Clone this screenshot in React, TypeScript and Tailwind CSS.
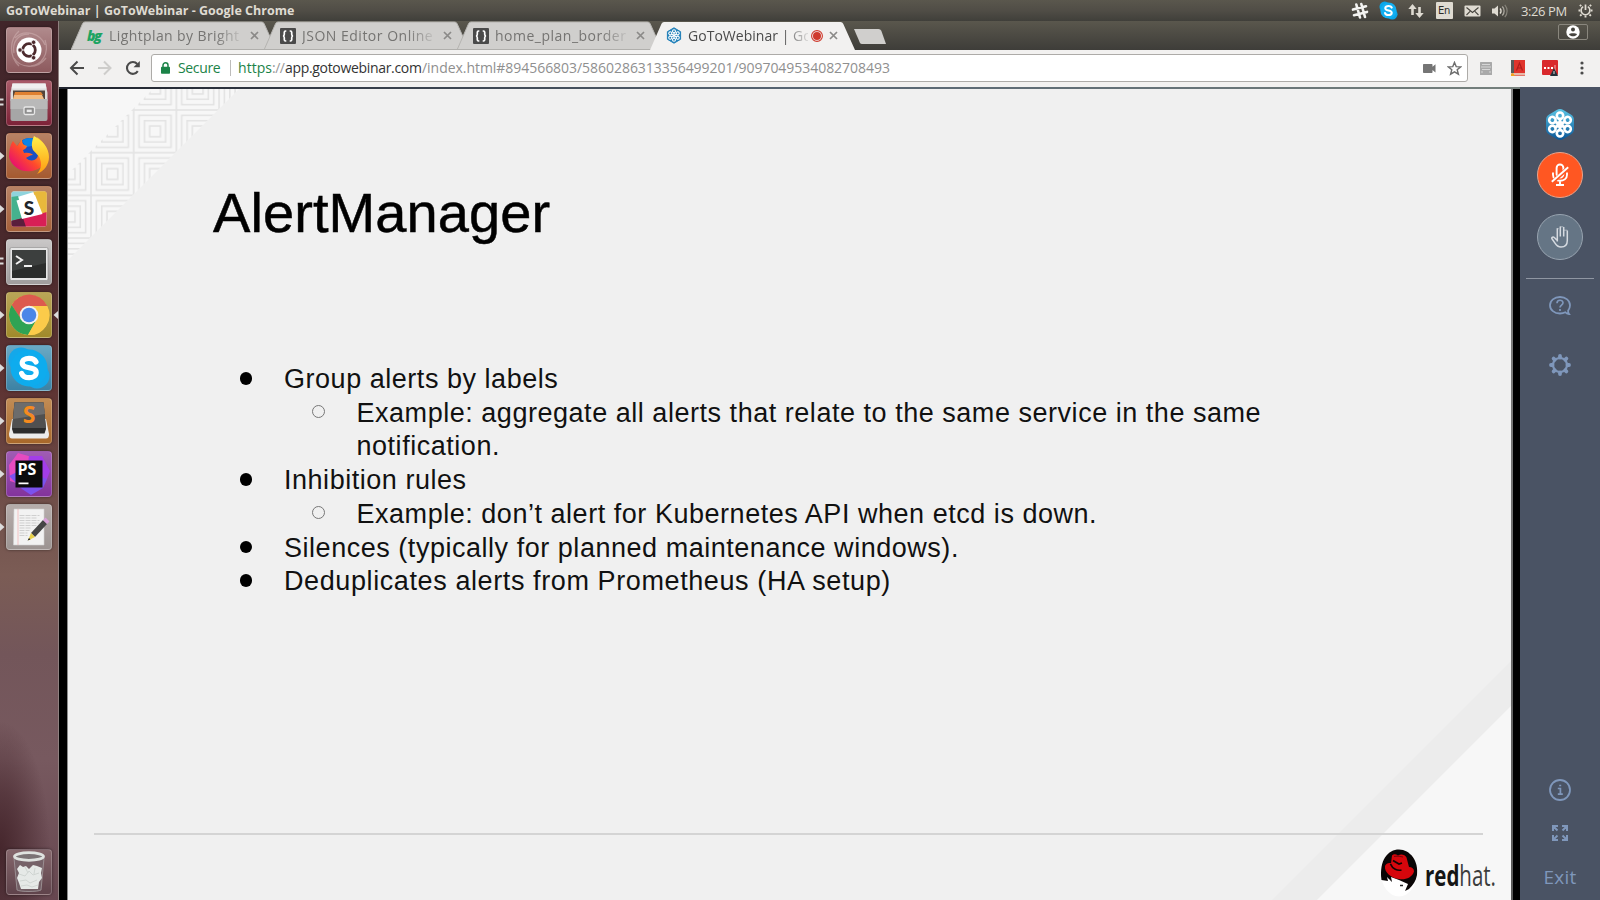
import React from "react";

const ubuntu = "font-['Open_Sans','Noto_Sans',sans-serif]";
const arial = "font-['Liberation_Sans',Arial,sans-serif]";

/* ---------- desktop top bar ---------- */

function SkypeCloud({ size }: { size: number }) {
  return (
    <svg width={size} height={size} viewBox="0 0 20 20">
      <circle cx="6" cy="6" r="5.500" fill="#0aa5e8" />
      <circle cx="14" cy="14" r="5.500" fill="#0aa5e8" />
      <circle cx="10" cy="10" r="8.500" fill="#12aef0" />
      <path d="M13.400 6.900C12.800 5.600 11.500 5.200 10 5.200c-2 0-3.400.9-3.400 2.400 0 3.200 6.800 1.600 6.800 4.700 0 1.500-1.500 2.500-3.500 2.500-1.700 0-3-.7-3.500-2.100" fill="none" stroke="#fff" strokeWidth="2.200" strokeLinecap="round" />
    </svg>
  );
}

function TopBar() {
  return (
    <header className="flex h-[21px] shrink-0 items-center bg-linear-to-b from-[#5a574d] via-[#504d46] to-[#403f3a] pl-[6px]">
      <h1 className={`${ubuntu} grow whitespace-nowrap text-[12.5px] leading-[20px] font-bold tracking-[0.01px] text-[#dfdbd2]`}>
        GoToWebinar | GoToWebinar - Google Chrome
      </h1>
      <div className="flex w-[168px] items-center">
        <span className="flex w-7 justify-center">
          <svg width="18" height="18" viewBox="0 0 18 18" stroke="#f4f4f2" strokeWidth="2.600" strokeLinecap="round" fill="none">
            <path d="M5.300 2.500l3.700 13M10.300 2l3.700 13M2 7.600l13-3.300M3 13.200l13-3.300" />
          </svg>
        </span>
        <span className="flex w-7 justify-center"><SkypeCloud size={19} /></span>
        <span className="flex w-7 justify-center">
          <svg width="16" height="16" viewBox="0 0 16 16" fill="#dfdbd2">
            <path d="M4.500 1l4.200 5H5.800v6H3.200V6H.3zM11.500 15l-4.200-5h2.900V4h2.600v6h2.900z" />
          </svg>
        </span>
        <span className="flex w-7 justify-center">
          <span className="flex h-[17px] w-[17px] items-center justify-center rounded-[1px] bg-[#dfdbd2] font-['DejaVu_Sans',sans-serif] text-[10px] tracking-[-0.3px] text-[#2c2b27]">En</span>
        </span>
        <span className="flex w-7 justify-center">
          <svg width="17" height="12" viewBox="0 0 17 12">
            <rect x=".5" y=".5" width="16" height="11" rx="1" fill="#dfdbd2" />
            <path d="M2.500 2.500l6 5 6-5M2.500 10l3.600-3.600M14.500 10l-3.600-3.600" fill="none" stroke="#45433d" strokeWidth="1.100" />
          </svg>
        </span>
        <span className="flex w-7 justify-center">
          <svg width="18" height="16" viewBox="0 0 18 16" fill="none">
            <path d="M1 5.500h2.500L7 2.500v11L3.500 10.500H1z" fill="#dfdbd2" />
            <path d="M9 5.500a3.500 3.500 0 0 1 0 5" stroke="#dfdbd2" strokeWidth="1.400" />
            <path d="M11.300 3.500a6.500 6.500 0 0 1 0 9" stroke="#aaa79e" strokeWidth="1.300" />
            <path d="M13.800 1.800a9.500 9.500 0 0 1 0 12.400" stroke="#858279" strokeWidth="1.200" />
          </svg>
        </span>
      </div>
      <span className={`${ubuntu} ml-[7px] w-[57px] whitespace-nowrap text-[13px] leading-[20px] tracking-[-0.4px] text-[#dfdbd2]`}>3:26 PM</span>
      <span className="mr-[7px] flex">
        <svg width="15" height="15" viewBox="0 0 15 15" fill="none" stroke="#dfdbd2">
          <path d="M5.200 3.600a4.400 4.400 0 1 0 4.600 0" strokeWidth="1.600" />
          <path d="M7.500 1.500v5.500" strokeWidth="1.700" />
          <path d="M3.200 3.200L1.900 1.900M11.800 3.200l1.300-1.300M2.300 7.500H.5M14.500 7.500h-1.800M3.500 11.500l-1.400 1.400M11.500 11.500l1.400 1.400M7.500 12.500v2" strokeWidth="1.900" />
        </svg>
      </span>
    </header>
  );
}

/* ---------- launcher ---------- */

function Tile({ tint, marks = 0, active = false, children }: { tint: string; marks?: number; active?: boolean; children: React.ReactNode }) {
  return (
    <div className="relative flex h-[46px] w-full shrink-0 pl-[6px]">
      {marks === 1 && (
        <svg className="absolute top-[19px] left-0" width="5" height="8"><path d="M0 0l4.500 4L0 8z" fill="#dcdcdc" /></svg>
      )}
      {marks === 2 && (
        <svg className="absolute top-[18px] left-0" width="4" height="9"><path d="M0 1.500h3.500M0 6.500h3.500" stroke="#dcdcdc" strokeWidth="2" /></svg>
      )}
      <div className={`flex h-[46px] w-[46px] items-center justify-center overflow-hidden rounded-[4px] border border-white/20 shadow-[0_0_3px_rgba(0,0,0,0.5)] ${tint}`}>
        {children}
      </div>
      {active && (
        <svg className="absolute top-[19px] right-0" width="5" height="8"><path d="M5 0L.5 4 5 8z" fill="#dcdcdc" /></svg>
      )}
    </div>
  );
}

function Launcher() {
  return (
    <nav className="flex w-[59px] shrink-0 flex-col border-r border-[#8f8080] bg-[radial-gradient(ellipse_50px_130px_at_0_830px,#45262c_0%,#45262c99_45%,transparent_100%),linear-gradient(180deg,#41252a_0%,#4a292c_25%,#5e3433_42%,#74544e_57%,#7b5c55_63%,#73565a_72%,#77595f_84%,#674750_100%)] pt-[6px] pb-[5px]">
      <div className="flex grow flex-col gap-[7px]">
        <Tile tint="bg-linear-to-b from-[#b08a8c] to-[#8d5a5e]">
          <svg width="44" height="44" viewBox="0 0 44 44" fill="none">
            <path d="M22 6C10 6 5 15 7 25M8 10C18 0 34 6 38 17M38 12c5 14-4 25-14 26M39 30C30 42 13 40 7 30M12 3C2 12 2 28 12 38" stroke="#d9bcbc" strokeOpacity=".45" strokeWidth="1.300" />
            <circle cx="22" cy="22" r="12.500" fill="#fff" />
            <circle cx="22" cy="22" r="6.300" stroke="#4d2b2e" strokeWidth="2.800" />
            <path d="M22 22L13 22M22 22l5-8M22 22l5 8" stroke="#fff" strokeWidth="1" />
            <circle cx="13" cy="22" r="2.200" fill="#4d2b2e" stroke="#fff" strokeWidth=".7" />
            <circle cx="26.600" cy="14.300" r="2.200" fill="#4d2b2e" stroke="#fff" strokeWidth=".7" />
            <circle cx="26.600" cy="29.700" r="2.200" fill="#4d2b2e" stroke="#fff" strokeWidth=".7" />
          </svg>
        </Tile>
        <Tile marks={2} tint="bg-linear-to-b from-[#a85a68] to-[#7d2238]">
          <svg width="44" height="44" viewBox="0 0 44 44">
            <path d="M5.500 2.500h33L40.500 12v8h-37v-8z" fill="#dedede" />
            <path d="M5.500 2.500h33l1 5h-35z" fill="#f0f0f0" />
            <rect x="6" y="9.500" width="32" height="9" fill="#54453c" />
            <path d="M8 11h26l2 3H7z" fill="#e08030" />
            <path d="M7 14h28l2 4H6z" fill="#f3bd84" />
            <path d="M3.500 18h37v20a2 2 0 0 1-2 2h-33a2 2 0 0 1-2-2z" fill="#a6a6a6" />
            <path d="M3.500 18h37v10h-37z" fill="#b9b9b9" />
            <rect x="17" y="26" width="10.500" height="7.500" rx="1.500" fill="#8c8c8c" stroke="#e8e8e8" strokeWidth="1.300" />
            <rect x="19.700" y="28.600" width="5" height="2.500" fill="#e8e8e8" />
          </svg>
        </Tile>
        <Tile marks={1} tint="bg-linear-to-b from-[#b78265] to-[#a55a30]">
          <svg width="44" height="44" viewBox="0 0 44 44">
            <defs>
              <linearGradient id="fox" x1="1" y1="0" x2=".1" y2=".8"><stop offset="0" stopColor="#ffe23c" /><stop offset=".35" stopColor="#ff9a1c" /><stop offset=".65" stopColor="#ff4a2c" /><stop offset="1" stopColor="#e8126c" /></linearGradient>
              <linearGradient id="foxTail" x1="0" y1="0" x2="0" y2="1"><stop offset="0" stopColor="#fff04a" /><stop offset="1" stopColor="#ff9a10" /></linearGradient>
            </defs>
            <circle cx="23" cy="18" r="14" fill="#1c4fc4" />
            <path d="M15 7c3-3 8-4 12-2l-2 7-6 1z" fill="#0a84e8" />
            <path d="M6 7l4 5 5-7c0 4 1 6 5 7-1 3-2 3-4 4l1 3c5-1 8 1 9 2-3 0-5 2-7 3 5 5 13 2 12-5 0-3-1-5-3-7 1-5 3-7 2-9 7 5 11 12 11 19a20 19 0 0 1-39 1C2 17 3 11 6 7z" fill="url(#fox)" />
            <path d="M27 2c9 5 15 12 15 21 0 8-5 14-12 17 4-5 5-10 3-15-1-4-5-6-7-9-2-5-1-9 1-14z" fill="url(#foxTail)" />
          </svg>
        </Tile>
        <Tile marks={1} tint="bg-linear-to-b from-[#b78265] to-[#a5603a]">
          <svg width="44" height="44" viewBox="0 0 44 44">
            <defs><clipPath id="slackClip"><rect x="4.500" y="4.500" width="35" height="35" rx="2" /></clipPath></defs>
            <g clipPath="url(#slackClip)">
              <rect x="4" y="4" width="36" height="36" fill="#fff" />
              <path d="M4 4h26L4 12z" fill="#8fd3dc" />
              <path d="M29 4h11v23z" fill="#e5b438" />
              <path d="M26 4h14v24l-6-1z" fill="#e8b83c" />
              <path d="M4 10l7-1 7 24-14 4z" fill="#45b28e" />
              <path d="M4 34l36-9v15H4z" fill="#d81e56" />
              <path d="M4 34l12-3 3 9H4z" fill="#5a1e3c" />
              <path d="M9.500 13.500L28 8l7.500 19L15 32z" fill="#fff" />
            </g>
            <text x="22" y="28" textAnchor="middle" fontFamily="Lato, sans-serif" fontWeight="900" fontSize="19" fill="#222428">S</text>
          </svg>
        </Tile>
        <Tile marks={2} tint="bg-linear-to-b from-[#c9c7c7] to-[#a09d9d]">
          <svg width="44" height="44" viewBox="0 0 44 44">
            <rect x="3" y="7.500" width="38" height="33" rx="1.500" fill="#e6e6e6" stroke="#8a8a8a" strokeWidth=".6" />
            <rect x="5" y="10" width="34" height="28" fill="#2b2d2c" />
            <path d="M5 10h34v13L5 31z" fill="#3c3f3e" />
            <path d="M9 16l6 4-6 4M17 26h8" fill="none" stroke="#f0f0f0" strokeWidth="2" />
          </svg>
        </Tile>
        <Tile marks={1} active tint="bg-linear-to-b from-[#b9a557] to-[#a08a2a]">
          <svg width="44" height="44" viewBox="0 0 44 44">
            <circle cx="22" cy="22" r="20" fill="#fbc843" />
            <path d="M22 13h18.300A20 20 0 0 0 4.700 12l9 14z" fill="#dc5a4e" />
            <path d="M4.700 12A20 20 0 0 0 21 42l9-16-16 0z" fill="#2fa354" />
            <path d="M40.300 13H22a9 9 0 0 1 8 13l-9 16A20 20 0 0 0 40.300 13z" fill="#fbcb4a" />
            <circle cx="22" cy="22" r="9.300" fill="#f1f1f1" />
            <circle cx="22" cy="22" r="7.300" fill="#4a86e8" />
          </svg>
        </Tile>
        <Tile marks={1} tint="bg-linear-to-b from-[#6aa9c4] to-[#3c82a4]">
          <svg width="44" height="44" viewBox="0 0 44 44">
            <circle cx="14" cy="14" r="12.500" fill="#14a8ea" />
            <circle cx="30" cy="30" r="12.500" fill="#14a8ea" />
            <circle cx="22" cy="22" r="18.500" fill="#0eacee" />
            <path d="M29 16c-1.200-2.500-3.800-3.600-7-3.600-4 0-6.800 1.700-6.800 4.600 0 6.500 14 3 14 9.400 0 3.200-3 5.300-7 5.300-3.600 0-6.600-1.400-7.600-4.300" fill="none" stroke="#fff" strokeWidth="5.200" strokeLinecap="round" />
          </svg>
        </Tile>
        <Tile marks={1} tint="bg-linear-to-b from-[#c18c55] to-[#a8682a]">
          <svg width="44" height="44" viewBox="0 0 44 44">
            <path d="M5 20L2 35c0 3 1 4.500 3 4.500h34c2 0 3-1.500 3-4.500L39 20z" fill="#ececec" />
            <path d="M7.500 3.500h29L39 30l-1.500 4.500h-31L5 30z" fill="#2c2c2c" />
            <path d="M7.500 3.500h29L39 29H5z" fill="#505050" />
            <path d="M7.500 3.500h29L38 15 6.200 20z" fill="#6c6c6c" />
            <text x="22" y="24" textAnchor="middle" fontFamily="Open Sans, sans-serif" fontWeight="700" fontSize="23" fill="#f58a1f">S</text>
          </svg>
        </Tile>
        <Tile marks={1} tint="bg-linear-to-b from-[#a05cb4] to-[#83339c]">
          <svg width="44" height="44" viewBox="0 0 44 44">
            <path d="M2 13L11 1l14 4-3 30L3 29z" fill="#e64bc0" />
            <path d="M22 4l13 0 8 15-3 8-22 4z" fill="#a33de8" />
            <path d="M2 24l12-6 26 9-4 9-12 7-9-6z" fill="#7b52ee" />
            <rect x="8.500" y="8.500" width="27" height="27" fill="#0b0b0d" />
            <text x="10.500" y="22.500" fontFamily="Open Sans, sans-serif" fontWeight="700" fontSize="16" fill="#fff">PS</text>
            <path d="M11.500 31.300h10" stroke="#fff" strokeWidth="1.800" />
          </svg>
        </Tile>
        <Tile marks={1} tint="bg-linear-to-b from-[#b6adab] to-[#9c9492]">
          <svg width="44" height="44" viewBox="0 0 44 44">
            <path d="M7 4h30v36H6.500z" fill="#f2f2f2" stroke="#d0d0d0" strokeWidth=".6" />
            <path d="M11 4v36" stroke="#f2a3a3" strokeWidth=".6" />
            <path d="M12.500 10.500h20M12.500 13h18M12.500 15.500h20M12.500 18h19M12.500 20.500h17M12.500 23h12M12.500 25.500h10M12.500 28h8M12.500 30.500h8" stroke="#cfcfcf" strokeWidth="1" strokeDasharray="5 1" />
            <path d="M36 15l4 4-12 13-4-4z" fill="#454545" />
            <path d="M36 15l2.500-2.500 4 4L40 19z" fill="#d8a0d8" />
            <path d="M24 28l4 4-7 3.500z" fill="#e8d24a" />
            <path d="M22 33l1.500 1.500-3 1z" fill="#222" />
          </svg>
        </Tile>
      </div>
      <Tile tint="bg-linear-to-b from-[#85676c] to-[#5f434b]">
        <svg width="44" height="44" viewBox="0 0 44 44">
          <path d="M7 8h30l-3 32c-3 2-21 2-24 0z" fill="#75646a" fillOpacity=".8" stroke="#a59c9e" strokeWidth=".8" />
          <path d="M10 19l3-4 3 2 3-1 3 3 4-4 4 1 5 2-1 5 1 5-3 4-1 7H14l-2-6-2-5 2-5z" fill="#e6e9e7" />
          <path d="M12 24l6 2 4-5 4 4 6-2M13 31l6-1 4 3 7-3M14 36l6-1 5 2 6-2M18 17l3 6M28 18l-1 6" stroke="#d0d5d2" strokeWidth="1" fill="none" />
          <ellipse cx="22" cy="6.500" rx="14.500" ry="3.800" fill="#7b7375" stroke="#dfe2df" strokeWidth="2.800" />
        </svg>
      </Tile>
    </nav>
  );
}

/* ---------- browser chrome ---------- */

function BracesIcon() {
  return (
    <svg width="16" height="16" viewBox="0 0 16 16">
      <rect width="16" height="16" rx="1" fill="#4a4a4a" />
      <path d="M6.300 3H5.600c-1 0-1.300.5-1.300 1.300v2c0 1-.4 1.600-1.300 1.700.9.1 1.300.7 1.300 1.700v2c0 .8.3 1.300 1.300 1.300h.7M9.700 3h.7c1 0 1.300.5 1.300 1.300v2c0 1 .4 1.600 1.300 1.700-.9.1-1.300.7-1.300 1.700v2c0 .8-.3 1.300-1.300 1.300h-.7" fill="none" stroke="#fff" strokeWidth="1.700" />
    </svg>
  );
}

const petals = [0, 60, 120, 180, 240, 300];

function DaisySmall() {
  return (
    <svg width="16" height="17" viewBox="0 0 16 17">
      <path d="M8 .8l6.600 3.900v7.600L8 16.200l-6.600-3.900V4.700z" fill="#1f7fb8" stroke="#1f7fb8" strokeLinejoin="round" />
      {petals.map((a) => (
        <g key={a} transform={`rotate(${a} 8 8.500)`}>
          <path d="M8 8.500V5.500" stroke="#fff" strokeWidth="1.300" />
          <circle cx="8" cy="4.200" r="1.500" fill="none" stroke="#fff" strokeWidth="1.100" />
        </g>
      ))}
    </svg>
  );
}

function CloseX() {
  return <svg width="9" height="9" viewBox="0 0 9 9"><path d="M1 1l7 7M8 1L1 8" stroke="#8b8a88" strokeWidth="1.700" /></svg>;
}

function Tab({ icon, title, spacing, active = false, first = false }: { icon: React.ReactNode; title: React.ReactNode; spacing: string; active?: boolean; first?: boolean }) {
  return (
    <div className={`relative flex h-[29px] w-[206px] shrink-0 items-center ${first ? "" : "-ml-[13px]"} ${active ? "z-10" : ""}`}>
      <svg className="absolute inset-0" width="206" height="29" viewBox="0 0 206 29">
        <path d="M0 29L11.500 2.800Q12.300 1 14 1H190.500Q192.500 1 193.200 2.800L205 29z" fill={active ? "#f2f1f0" : "#d0cfcd"} stroke={active ? "none" : "#b5b4b1"} strokeWidth="1" />
        {!active && <path d="M0 28.500H206" stroke="#b0afac" />}
      </svg>
      <div className="relative flex w-full items-center pl-4">
        <span className="flex w-[22px] shrink-0">{icon}</span>
        <span className={`${ubuntu} shrink-0 whitespace-nowrap text-[14px] leading-[20px] ${spacing} ${active ? "w-[120px] text-[#4a4a4a] [mask-image:linear-gradient(90deg,#000_94px,transparent_124px)]" : "w-[138px] text-[#757472] [mask-image:linear-gradient(90deg,#000_106px,transparent_136px)]"}`}>
          {title}
        </span>
        {active && (
          <svg className="ml-[3px] shrink-0" width="12" height="12" viewBox="0 0 12 12">
            <circle cx="6" cy="6" r="5.400" fill="none" stroke="#cf3a2d" strokeWidth="1.100" />
            <circle cx="6" cy="6" r="4" fill="#cf3a2d" />
          </svg>
        )}
        <span className={`${active ? "ml-[6px]" : "ml-[3px]"} flex shrink-0`}><CloseX /></span>
      </div>
    </div>
  );
}

function TabStrip() {
  return (
    <div className="flex h-[29px] shrink-0 bg-linear-to-b from-[#5a574d] to-[#3e3d39] pl-[12px]">
      <Tab first spacing="tracking-[0.4px]" title="Lightplan by Bright" icon={<span className={`${ubuntu} text-[14px] leading-[16px] font-extrabold italic tracking-[-1.5px] text-[#1da462]`}>bg</span>} />
      <Tab spacing="tracking-[0.5px]" title="JSON Editor Online" icon={<BracesIcon />} />
      <Tab spacing="tracking-[0.5px]" title="home_plan_border" icon={<BracesIcon />} />
      <Tab active spacing="tracking-[0.03px]" title="GoToWebinar | Go" icon={<DaisySmall />} />
      <svg className="mt-[8px] -ml-[3px]" width="34" height="16" viewBox="0 0 34 16">
        <path d="M1 0h24.500q2 0 2.800 1.800L33 15H9Q7.500 15 6.800 13.500z" fill="#d0cfcd" />
      </svg>
      <div className="ml-auto mr-[12px] mt-[3px] flex h-[16px] w-[30px] items-center justify-center rounded-[2px] border border-[#8a877e]">
        <svg width="14" height="14" viewBox="0 0 14 14">
          <circle cx="7" cy="7" r="6.700" fill="#fff" />
          <circle cx="7" cy="4.600" r="2" fill="#45433e" />
          <path d="M3 9.200c1.200-1.300 6.800-1.300 8 0-1.500 2.700-6.500 2.700-8 0z" fill="#45433e" />
        </svg>
      </div>
    </div>
  );
}

function Toolbar() {
  return (
    <div className="flex h-[37px] shrink-0 items-center bg-[#f2f1f0] pb-[1px]">
      <div className="flex w-[92px] items-center gap-[13px] pl-[10px]">
        <svg width="16" height="16" viewBox="0 0 16 16" fill="none" stroke="#4a4a4a" strokeWidth="2"><path d="M15 8H2.500M8.500 1.500L2 8l6.500 6.500" /></svg>
        <svg width="14" height="16" viewBox="0 0 14 16" fill="none" stroke="#cecdcb" strokeWidth="2"><path d="M0 8h12M6 1.500L12.500 8 6 14.500" /></svg>
        <svg width="16" height="16" viewBox="0 0 16 16"><path d="M12.800 11.200A5.900 5.900 0 1 1 12.300 4" fill="none" stroke="#4a4a4a" strokeWidth="2.100" /><path d="M14.800 1v6.300H8.500z" fill="#4a4a4a" /></svg>
      </div>
      <div className={`${ubuntu} flex h-[28px] w-[1317px] items-center rounded-[3px] border border-[#adaba8] bg-white text-[14px] leading-[26px] whitespace-nowrap`}>
        <svg className="ml-[9px] shrink-0" width="9" height="12" viewBox="0 0 9 12"><path d="M2 5.500V3.300a2.500 2.500 0 0 1 5 0v2.200" fill="none" stroke="#1b8348" strokeWidth="1.500" /><rect y="4.800" width="9" height="7" rx=".8" fill="#1b8348" /></svg>
        <span className="ml-[8px] w-[52px] tracking-[-0.35px] text-[#1b8348]">Secure</span>
        <span className="h-[16px] w-px bg-[#bdbcba]" />
        <span className="ml-[7px] w-[34px] tracking-[0.05px] text-[#1b8348]">https</span>
        <span className="w-[13px] tracking-[-0.5px] text-[#999]">://</span>
        <span className="w-[137px] tracking-[-0.32px] text-[#333]">app.gotowebinar.com</span>
        <span className="tracking-[-0.04px] text-[#8f8f8f]">/index.html#894566803/5860286313356499201/9097049534082708493</span>
        <span className="mr-[5px] ml-auto flex items-center gap-[11px]">
          <svg width="13" height="9" viewBox="0 0 13 9" fill="#757575"><path d="M0 .8Q0 0 .8 0h8Q9.500 0 9.500.8v2L12.500.3v8.200L9.500 6v2.200Q9.500 9 8.800 9h-8Q0 9 0 8.200z" /></svg>
          <svg width="15" height="15" viewBox="0 0 15 15" fill="none" stroke="#6e6e6e" strokeWidth="1.400"><path d="M7.500 1.400l1.700 4.200 4.500.3-3.500 2.900 1.200 4.400-3.900-2.400-3.900 2.400 1.200-4.400L1.300 5.900l4.500-.3z" /></svg>
        </span>
      </div>
      <div className="ml-[2px] flex">
        <span className="flex w-8 items-center justify-center">
          <svg width="12" height="13" viewBox="0 0 12 13"><rect width="12" height="13" rx=".5" fill="#a9a9a9" /><path d="M2 2.500h8M1 5h10M2 7.500h8M1 10h2M9 10h2" stroke="#d6d6d6" /></svg>
        </span>
        <span className="flex w-8 items-center justify-center">
          <svg width="14" height="16" viewBox="0 0 14 16"><rect width="14" height="16" fill="#e0342c" /><rect width="3" height="14" fill="#5a5a5a" /><path d="M0 13h14v2.500H0z" fill="#e8b8a8" /><path d="M0 14l2-1 2 3H0z" fill="#f2a21c" /><path d="M5.500 10.500L8.500 3l3 7.500M6.500 8h4" fill="none" stroke="#b01c1c" strokeWidth="1.200" /></svg>
        </span>
        <span className="flex w-8 items-center justify-center">
          <svg width="16" height="16" viewBox="0 0 16 16"><rect width="16" height="15" rx="1" fill="#d9282c" /><path d="M2 8h2M5.500 8h2M9 8h2" stroke="#fff" strokeWidth="2" /><path d="M13 5v6" stroke="#f3b0b0" /><path d="M12 8l4 8H8z" fill="#23303a" /><path d="M12 11v3" stroke="#ddd" /></svg>
        </span>
        <span className="flex w-8 items-center justify-center">
          <svg width="4" height="14" viewBox="0 0 4 14" fill="#4a4a4a"><circle cx="2" cy="2" r="1.600" /><circle cx="2" cy="7" r="1.600" /><circle cx="2" cy="12" r="1.600" /></svg>
        </span>
      </div>
    </div>
  );
}

/* ---------- shared slide ---------- */

function SlideBackdrop() {
  return (
    <svg className="absolute inset-0" width="1444" height="811" viewBox="0 0 1444 811">
      <defs>
        <pattern id="diamonds" x="24" y="21" width="42.700" height="42.700" patternUnits="userSpaceOnUse">
          <g fill="none" stroke="#e3e3e3" strokeWidth="1.600">
            <rect x="0" y="0" width="42.700" height="42.700" />
            <rect x="5.350" y="5.350" width="32" height="32" />
            <rect x="10.700" y="10.700" width="21.300" height="21.300" />
            <rect x="16" y="16" width="10.700" height="10.700" />
          </g>
        </pattern>
      </defs>
      <path d="M0 0H172L0 172z" fill="#f7f7f7" />
      <path d="M86 0H172L0 172V86z" fill="url(#diamonds)" />
      <path d="M1444 572V811H1205z" fill="#ececec" />
      <path d="M1444 617V811H1250z" fill="#f7f7f7" />
      <path d="M.5 0V811" stroke="#8c8c8c" />
    </svg>
  );
}

function RedHatLogo() {
  return (
    <svg width="124" height="52" viewBox="0 0 124 52">
      <ellipse cx="20" cy="27" rx="18" ry="23.500" fill="#fff" />
      <path d="M2.500 34C0 14 9 3.500 20 3.500S40 15 38 29c-1 6-4 10-8 14l-4 2 3-7-9-4-8-3 1 5-5-5 1 4z" fill="#0a0606" />
      <path d="M13 9.500c2-2 4-1 6 0 3-2 7-1 8.500 2L30 21c3 0 5 1.500 5 4.500C33 32 26 34 20 33 12 32 5 26 6 20c1-2.500 4-3.500 6-2.500z" fill="#d6060c" />
      <path d="M11.500 18c2 5 7 7 11 6M14 14.500l6 3.500 3-1" fill="none" stroke="#140404" strokeWidth="1.700" />
      <path d="M15 10.500l4-.5 5 1" fill="none" stroke="#7a0508" strokeWidth="1.200" />
      <path d="M21 39.500h3" stroke="#222" strokeWidth="1.500" />
      <text x="46" y="39.500" textLength="71" lengthAdjust="spacingAndGlyphs" fontFamily="Open Sans, sans-serif" fontWeight="700" fontSize="29" fill="#151515">
        red<tspan fontWeight="400" fill="#3c3c3c">hat.</tspan>
      </text>
    </svg>
  );
}

function Bullet({ children }: { children: React.ReactNode }) {
  return (
    <li className="flex">
      <span className="flex h-[33.6px] w-[44px] shrink-0 items-center">
        <span className="mt-[-3px] h-[12.5px] w-[12px] rounded-full bg-black" />
      </span>
      <div>{children}</div>
    </li>
  );
}

function SubBullet({ children }: { children: React.ReactNode }) {
  return (
    <div className="flex pl-[28px]">
      <span className="flex h-[33.6px] w-[44.5px] shrink-0 items-center">
        <span className="mt-[-4px] h-[13px] w-[12.5px] rounded-full border border-[#777]" />
      </span>
      <div>{children}</div>
    </div>
  );
}

function Slide() {
  return (
    <main className={`${arial} relative flex h-full w-[1444px] shrink-0 flex-col bg-[#f0f0f0] text-black`}>
      <SlideBackdrop />
      <h2 className="relative mt-[92px] ml-[146px] text-[56px] leading-[64px] tracking-[0.08px] [-webkit-text-stroke:0.5px_#000]">AlertManager</h2>
      <ul className="relative mt-[118px] ml-[173px] text-[27px] leading-[33.7px] tracking-[0.53px] whitespace-nowrap text-[#111]">
        <Bullet>
          Group alerts by labels
          <SubBullet>
            Example: aggregate all alerts that relate to the same service in the same
            <br />
            notification.
          </SubBullet>
        </Bullet>
        <Bullet>
          Inhibition rules
          <SubBullet>Example: don’t alert for Kubernetes API when etcd is down.</SubBullet>
        </Bullet>
        <Bullet>Silences (typically for planned maintenance windows).</Bullet>
        <Bullet><span className="tracking-[0.6px]">Deduplicates alerts from Prometheus (HA setup)</span></Bullet>
      </ul>
      <div className="relative mt-auto mr-[28px] ml-[27px] h-[2px] bg-[#d4d4d4]" />
      <footer className="relative flex h-[65px] shrink-0 justify-end pt-[11px] pr-[8px]">
        <RedHatLogo />
      </footer>
    </main>
  );
}

/* ---------- webinar control rail ---------- */

function GearIcon() {
  return (
    <svg width="24" height="24" viewBox="0 0 24 24" fill="none" stroke="#7f97bb">
      <circle cx="12" cy="12" r="7" strokeWidth="2.200" />
      {[0, 45, 90, 135, 180, 225, 270, 315].map((a) => (
        <path key={a} d="M12 4.500V3" strokeWidth="3.800" strokeLinecap="round" transform={`rotate(${a} 12 12)`} />
      ))}
    </svg>
  );
}

function Rail() {
  return (
    <aside className="flex w-[80px] shrink-0 flex-col items-center bg-[#4a5364] pt-[19px]">
      <svg width="34" height="36" viewBox="0 0 34 36">
        <defs><linearGradient id="daisy" gradientUnits="userSpaceOnUse" x1="0" y1="2" x2="0" y2="34"><stop offset="0" stopColor="#5cc8e8" /><stop offset="1" stopColor="#0a5596" /></linearGradient></defs>
        <path d="M17 9.500l7.500 4.500v9L17 27.500 9.500 23v-9z" fill="url(#daisy)" stroke="url(#daisy)" strokeWidth="13" strokeLinejoin="round" />
        {petals.map((a) => (
          <g key={a} transform={`rotate(${a} 17 18.500)`}>
            <path d="M17 18.500v-6" stroke="#fff" strokeWidth="2.800" />
            <circle cx="17" cy="9.700" r="3.200" fill="none" stroke="#fff" strokeWidth="2.600" />
          </g>
        ))}
        <circle cx="17" cy="18.500" r="3.600" fill="#fff" />
      </svg>
      <button className="mt-[10px] flex h-[46px] w-[46px] items-center justify-center rounded-full border border-[#e8a48c] bg-[#ff5722]">
        <svg width="18" height="24" viewBox="0 0 18 24" fill="none" stroke="#fff" strokeWidth="1.900">
          <rect x="5.600" y="1.500" width="6.800" height="13" rx="3.400" />
          <path d="M2 9.500v2.300c0 8 14 8 14 0V9.500M9 18v4M5 22h8" />
          <path d="M1 19.500L17 5" stroke="#ff5722" strokeWidth="4" />
          <path d="M.8 18.800L17.200 4.200" />
        </svg>
      </button>
      <button className="mt-[16px] flex h-[46px] w-[46px] items-center justify-center rounded-full border border-[#98a4b0] bg-[#657585]">
        <svg width="20" height="24" viewBox="0 0 20 24" fill="none" stroke="#d5dae0" strokeWidth="1.500" strokeLinejoin="round">
          <path d="M7.300 16.500V3.200M10.300 11.500V1.500M13.700 11.500V2M17.300 5.500V15.500c0 4-2.300 6.500-6.300 6.500-3 0-4.500-1.300-6-3.800L1.800 13.500c-.4-1.300 1.500-1.900 2.700-.8l2.800 2.800" />
          <path d="M7.300 3.700h1.500M13.700 5.200h3.600M10.300 1.800h3" strokeWidth="1" strokeOpacity=".6" />
        </svg>
      </button>
      <div className="mt-[18px] h-px w-[68px] shrink-0 bg-[#8f96a2]" />
      <svg className="mt-[16px] shrink-0" width="24" height="22" viewBox="0 0 24 22" fill="none" stroke="#7f97bb" strokeWidth="1.800">
        <path d="M12 2c-5.700 0-10 3.500-10 8.200s4.300 8.300 10 8.300c2 0 3.800-.4 5.300-1.200.8 1 2 1.700 3.700 1.700-.8-1-1-2-.9-3.400 1.200-1.500 1.900-3.300 1.900-5.400C22 5.500 17.700 2 12 2z" />
        <path d="M9 8.300c0-4 6-4 6-.5 0 2.400-3 2.200-3 4.700M12 14v2" strokeWidth="1.700" />
      </svg>
      <div className="mt-[36px] flex"><GearIcon /></div>
      <div className="mt-auto flex flex-col items-center">
        <svg width="24" height="24" viewBox="0 0 24 24" fill="none" stroke="#7f97bb" strokeWidth="1.800">
          <circle cx="12" cy="12" r="10" />
          <path d="M9.800 10.500h2.600v5.500M9.800 16.200h5M11.200 7.500h2" strokeWidth="1.700" />
        </svg>
        <svg className="mt-[23px]" width="16" height="16" viewBox="0 0 16 16" fill="none" stroke="#7f97bb" strokeWidth="2">
          <path d="M6 1H1v5M1 1l4.500 4.500M10 1h5v5M15 1l-4.500 4.500M6 15H1v-5M1 15l4.500-4.500M10 15h5v-5M15 15l-4.500-4.500" />
        </svg>
        <span className="mt-[22px] mb-[9px] font-['Open_Sans',sans-serif] text-[19px] leading-[28px] tracking-[0.2px] text-[#7f97bb]">Exit</span>
      </div>
    </aside>
  );
}

export default function App() {
  return (
    <div className="flex h-[900px] w-[1600px] flex-col overflow-hidden bg-black">
      <TopBar />
      <div className="flex min-h-0 grow">
        <Launcher />
        <div className="flex min-w-0 grow flex-col">
          <TabStrip />
          <Toolbar />
          <div className="flex min-h-0 grow">
            <div className="flex w-[1461px] shrink-0 flex-col bg-black">
              <div className="h-[2px] shrink-0 bg-linear-to-r from-[#20242e] via-[#566472] to-[#75807c]" />
              <div className="flex min-h-0 grow border-l-[8px] border-black">
                <Slide />
                <div className="h-full w-[2px] bg-linear-to-b from-[#8a8a8a] to-[#5a5a5a]" />
              </div>
            </div>
            <Rail />
          </div>
        </div>
      </div>
    </div>
  );
}
